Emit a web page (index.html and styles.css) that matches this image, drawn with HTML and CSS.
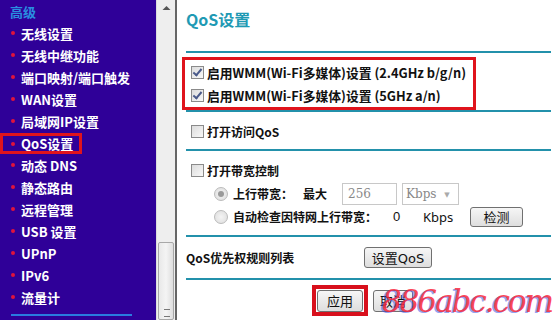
FILE: index.html
```html
<!DOCTYPE html>
<html>
<head>
    <title>QoS设置</title>
    <link rel="stylesheet" href="styles.css">
</head>
<body>
    <div class="frame">
        <div class="sidebar">
            <div class="menu">
                <div class="group">高级</div>
                <div class="item"><span class="dot"></span>无线设置</div>
                <div class="item"><span class="dot"></span>无线中继功能</div>
                <div class="item"><span class="dot"></span>端口映射/端口触发</div>
                <div class="item"><span class="dot"></span>WAN设置</div>
                <div class="item"><span class="dot"></span>局域网IP设置</div>
                <div class="item active"><span class="dot"></span>QoS设置</div>
                <div class="item"><span class="dot"></span>动态 DNS</div>
                <div class="item"><span class="dot"></span>静态路由</div>
                <div class="item"><span class="dot"></span>远程管理</div>
                <div class="item"><span class="dot"></span>USB 设置</div>
                <div class="item"><span class="dot"></span>UPnP</div>
                <div class="item"><span class="dot"></span>IPv6</div>
                <div class="item"><span class="dot"></span>流量计</div>
                <div class="menu-line"></div>
            </div>
            <div class="scrollbar">
                <div class="arrow">
                    <svg width="9" height="6" viewBox="0 0 9 6"><path d="M0.5 5 L4.5 1 L8.5 5 Z" fill="#555"/></svg>
                </div>
                <div class="thumb"><span class="grip"></span></div>
            </div>
        </div>
        <div class="divider"></div>
        <div class="content">
            <div class="title">QoS设置</div>

            <div class="section s1">
                <div class="highlight">
                    <label class="row"><span class="check on"></span>启用WMM(Wi-Fi多媒体)设置 (2.4GHz b/g/n)</label>
                    <label class="row"><span class="check on"></span>启用WMM(Wi-Fi多媒体)设置 (5GHz a/n)</label>
                </div>
            </div>

            <div class="section s2">
                <label class="row"><span class="check"></span>打开访问QoS</label>
            </div>

            <div class="section s3">
                <label class="row"><span class="check"></span>打开带宽控制</label>
                <div class="row sub">
                    <span class="radio on"></span>
                    <span class="lbl up">上行带宽：</span>
                    <span class="max">最大</span>
                    <span class="field">256</span>
                    <span class="select">Kbps <span class="caret">▼</span></span>
                </div>
                <div class="row sub">
                    <span class="radio"></span>
                    <span class="lbl auto">自动检查因特网上行带宽：</span>
                    <span class="zero">0</span>
                    <span class="unit">Kbps</span>
                    <span class="btn detect">检测</span>
                </div>
            </div>

            <div class="section s4">
                <div class="row">
                    <span class="rules">QoS优先权规则列表</span>
                    <span class="btn setqos">设置QoS</span>
                </div>
            </div>

            <div class="section s5">
                <div class="apply-box"><span class="btn apply">应用</span></div>
                <span class="btn cancel">取消</span>
            </div>

            <div class="watermark">886abc.com</div>
        </div>
    </div>
</body>
</html>
```

FILE: styles.css
```css
body {
    margin: 0;
    font-family: "Noto Sans CJK SC", "Liberation Sans", sans-serif;
    background: #fff;
}
.frame { display: flex; height: 320px; overflow: hidden; }

/* sidebar */
.sidebar { display: flex; width: 175px; background: #2f0098; }
.menu { width: 157px; padding-left: 8px; box-sizing: border-box; }
.group {
    color: #2a8ee0;
    font-size: 13px;
    font-weight: bold;
    height: 22px;
    line-height: 24px;
    padding-left: 2px;
}
.item {
    display: flex;
    align-items: center;
    height: 22px;
    color: #fff;
    font-size: 13px;
    font-weight: bold;
    white-space: nowrap;
}
.dot {
    width: 4px;
    height: 4px;
    background: #e0143c;
    border-radius: 50%;
    margin: 0 6px 0 3px;
}
.item.active {
    width: 82px;
    margin-left: -8px;
    padding-left: 8px;
    box-sizing: border-box;
    outline: 3px solid #e0141c;
    outline-offset: -3px;
    height: 21px;
    margin-top: 1px;
}
.menu-line {
    width: 121px;
    height: 2px;
    background: #2a7be0;
    margin: 6px 0 0 3px;
}

.scrollbar {
    position: relative;
    width: 18px;
    background: #eeeeee;
    border-left: 1px solid #dcdcdc;
}
.arrow { height: 16px; display: flex; justify-content: center; align-items: center; }
.thumb {
    position: absolute;
    left: 1px;
    right: 1px;
    top: 242px;
    bottom: 0;
    background: linear-gradient(90deg, #e8e8e8, #f4f4f4 50%, #dedede);
    border: 1px solid #a8a8a8;
    border-radius: 2px;
}
.grip {
    position: absolute;
    left: 5px;
    top: 66px;
    width: 6px;
    height: 6px;
    border-top: 1px solid #777;
    border-bottom: 1px solid #777;
}
.divider { width: 2px; background: #666; }

/* content */
.content { position: relative; flex: 1; padding: 0 6px 0 9px; }
.title {
    color: #1f9ab4;
    font-size: 16px;
    font-weight: bold;
    height: 51px;
    line-height: 38px;
}
.section { border-top: 2px solid #2391ab; }
.row {
    display: flex;
    align-items: center;
    font-size: 12px;
    font-weight: bold;
    color: #111;
    white-space: nowrap;
}
.s1 { height: 59px; padding-top: 4px; box-sizing: border-box; }
.highlight {
    width: 287px;
    height: 46px;
    margin-left: -4px;
    border: 3px solid #e0141c;
    padding: 1px 0 0 1px;
}
.highlight .row { height: 23px; font-size: 12.8px; }
.s2 { height: 37px; }
.s2 .row { height: 39px; }
.s3 { height: 86px; padding-top: 8px; box-sizing: border-box; }
.s3 .row { height: 23px; }
.row.sub { padding-left: 28px; font-weight: normal; }
.s4 { height: 41px; }
.s4 .row { height: 41px; }
.s5 { display: flex; align-items: center; padding-left: 126px; height: 36px; }

.check {
    flex: none;
    width: 11px;
    height: 11px;
    border: 1px solid #8a8a8a;
    background: linear-gradient(135deg, #dcdcdc, #f8f8f8);
    margin: 0 3px 0 5px;
    position: relative;
}
.check.on::after {
    content: "";
    position: absolute;
    left: 3px;
    top: 0;
    width: 3px;
    height: 7px;
    border: solid #4a5a8a;
    border-width: 0 2px 2px 0;
    transform: rotate(40deg);
}
.radio {
    flex: none;
    width: 12px;
    height: 12px;
    border-radius: 50%;
    border: 1px solid #bbb;
    background: radial-gradient(circle, #f4f4f4, #dcdcdc);
    margin-right: 5px;
    position: relative;
}
.radio.on::after {
    content: "";
    position: absolute;
    left: 3px;
    top: 3px;
    width: 6px;
    height: 6px;
    border-radius: 50%;
    background: #9a9a9a;
}
.lbl { flex: none; font-weight: bold; color: #111; }
.lbl.up { width: 70px; }
.lbl.auto { width: 160px; }
.max { flex: none; font-weight: bold; width: 39px; }
.field {
    flex: none;
    width: 48px;
    height: 20px;
    border: 1px solid #c8c8c8;
    font-family: "DejaVu Serif", serif;
    font-size: 12px;
    font-weight: normal;
    color: #888;
    line-height: 20px;
    padding-left: 5px;
    margin-right: 5px;
}
.select {
    flex: none;
    width: 52px;
    height: 20px;
    border: 1px solid #c8c8c8;
    font-family: "DejaVu Serif", serif;
    font-size: 12px;
    color: #888;
    line-height: 20px;
    padding-left: 3px;
}
.caret { font-size: 7px; color: #aaa; margin-left: 4px; vertical-align: 1px; }
.zero { flex: none; width: 30px; font-family: "Liberation Sans", sans-serif; font-size: 13px; }
.unit { flex: none; font-family: "Noto Sans", sans-serif; font-size: 13px; width: 47px; }
.btn {
    flex: none;
    display: inline-flex;
    align-items: center;
    justify-content: center;
    height: 20px;
    border: 1px solid #707070;
    border-radius: 3px;
    background: linear-gradient(#f6f6f6, #dedede);
    font-family: "DejaVu Sans", "Noto Sans CJK SC", sans-serif;
    font-weight: normal;
    font-size: 13px;
    color: #111;
    box-sizing: border-box;
}
.detect { width: 53px; height: 20px; font-family: "Noto Sans CJK SC", sans-serif; }
.rules { width: 178px; }
.setqos { width: 68px; height: 21px; }
.apply-box {
    border: 4px solid #d8101c;
    padding: 0 1px;
    height: 31px;
    box-sizing: border-box;
    display: flex;
    align-items: center;
    margin-top: 5px;
    margin-right: 5px;
}
.apply { width: 46px; height: 22px; }
.cancel { width: 40px; height: 22px; margin-top: 5px; }

.watermark {
    position: absolute;
    left: 205px;
    top: 281px;
    font-family: "DejaVu Serif", serif;
    font-style: italic;
    font-size: 31px;
    letter-spacing: -2px;
    color: rgba(250, 40, 60, 0.85);
    text-shadow: -2px 1px 0 rgba(60, 80, 230, 0.55);
    line-height: 40px;
    pointer-events: none;
}
```
